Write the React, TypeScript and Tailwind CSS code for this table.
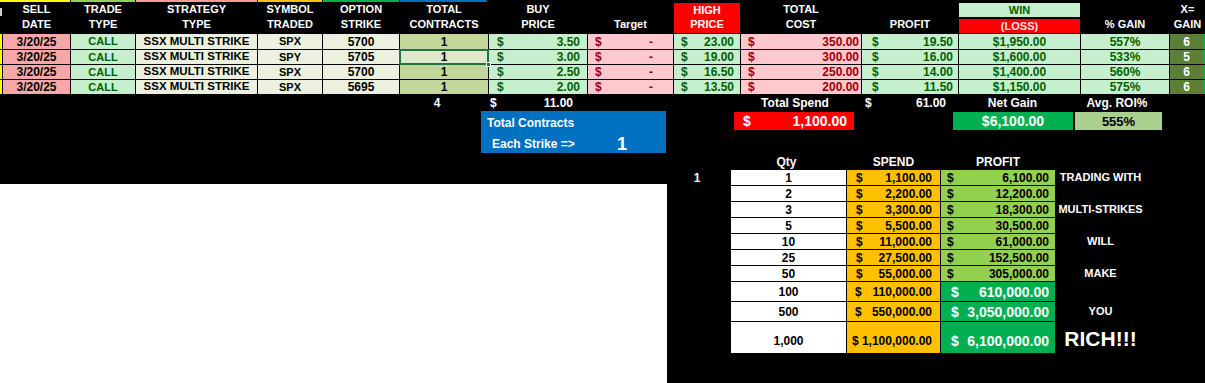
const cols =
  "grid grid-cols-[2px_67px_64px_121px_64px_76px_88px_98px_85px_66px_120px_96px_121px_88px_35px] gap-x-px";

const trades = [
  { date: "3/20/25", sym: "SPX", strike: "5700", buy: "3.50", high: "23.00", cost: "350.00", profit: "19.50", win: "$1,950.00", gain: "557%", x: "6" },
  { date: "3/20/25", sym: "SPY", strike: "5705", buy: "3.00", high: "19.00", cost: "300.00", profit: "16.00", win: "$1,600.00", gain: "533%", x: "5" },
  { date: "3/20/25", sym: "SPX", strike: "5700", buy: "2.50", high: "16.50", cost: "250.00", profit: "14.00", win: "$1,400.00", gain: "560%", x: "6" },
  { date: "3/20/25", sym: "SPX", strike: "5695", buy: "2.00", high: "13.50", cost: "200.00", profit: "11.50", win: "$1,150.00", gain: "575%", x: "6" },
];

const scale = [
  { qty: "1", spend: "1,100.00", profit: "6,100.00", note: "TRADING WITH" },
  { qty: "2", spend: "2,200.00", profit: "12,200.00", note: "" },
  { qty: "3", spend: "3,300.00", profit: "18,300.00", note: "MULTI-STRIKES" },
  { qty: "5", spend: "5,500.00", profit: "30,500.00", note: "" },
  { qty: "10", spend: "11,000.00", profit: "61,000.00", note: "WILL" },
  { qty: "25", spend: "27,500.00", profit: "152,500.00", note: "" },
  { qty: "50", spend: "55,000.00", profit: "305,000.00", note: "MAKE" },
];

function Head({ a, b }: { a?: string; b?: string }) {
  return (
    <div className="flex flex-col items-center text-[11px] leading-[15px]">
      <span className="h-[15px]">{a}</span>
      <span className="h-[15px]">{b}</span>
    </div>
  );
}

function Money({ v, cls }: { v: string; cls: string }) {
  return (
    <div className={"flex items-center justify-between text-[12px] " + cls}>
      <span>$</span>
      <span>{v}</span>
    </div>
  );
}

export default function App() {
  return (
    <div className="h-[383px] w-[1205px] bg-black text-white font-bold [font-family:'Liberation_Sans',Arial,sans-serif] flex flex-col overflow-hidden leading-none">
      {/* tab colour strip */}
      <div className="flex h-[2px]">
        <div className="w-[70px] bg-[#ffff00]" />
        <div className="ml-px w-[64px] bg-[#92d050]" />
        <div className="ml-px w-[121px] bg-[#ff9999]" />
        <div className="ml-px w-[64px] bg-[#ffc000]" />
        <div className="ml-px w-[76px] bg-[#00b050]" />
        <div className="ml-px w-[87px] bg-[#0070c0]" />
      </div>

      {/* header */}
      <div className={cols + " h-[31px]"}>
        <div className="flex pt-[6px]">
          <span className="h-[8px] w-[2px] bg-white/80" />
        </div>
        <Head a="SELL" b="DATE" />
        <Head a="TRADE" b="TYPE" />
        <Head a="STRATEGY" b="TYPE" />
        <Head a="SYMBOL" b="TRADED" />
        <Head a="OPTION" b="STRIKE" />
        <Head a="TOTAL" b="CONTRACTS" />
        <Head a="BUY" b="PRICE" />
        <Head b="Target" />
        <div className="mt-px bg-[#ff0000] flex flex-col items-center text-[11px] leading-[15px]">
          <span className="h-[14px]">HIGH</span>
          <span>PRICE</span>
        </div>
        <Head a="TOTAL" b="COST" />
        <Head b="PROFIT" />
        <div className="flex flex-col text-[11px]">
          <div className="mt-px h-[14px] bg-[#c6efce] text-[#006100] flex items-center justify-center">WIN</div>
          <div className="mt-[2px] h-[14px] bg-[#ff0000] text-[#ffe6e6] flex items-center justify-center">(LOSS)</div>
        </div>
        <Head b="% GAIN" />
        <Head a="X=" b="GAIN" />
      </div>

      {/* trade rows */}
      <div className="mt-px flex flex-col gap-y-px">
        {trades.map((t, i) => (
          <div key={i} className={cols + (i === 0 ? " h-[15px]" : " h-[14px]")}>
            <div className="bg-[#ffff00]" />
            <div className="bg-[#f6a8a8] text-black text-[12px] flex items-center justify-center">{t.date}</div>
            <div className="bg-[#c6efce] text-[#006100] text-[11px] flex items-center justify-center">CALL</div>
            <div className="bg-[#ebf1de] text-black text-[11.5px] flex items-center justify-center">SSX MULTI STRIKE</div>
            <div className="bg-[#ebf1de] text-black text-[11px] flex items-center justify-center">{t.sym}</div>
            <div className="bg-[#ebf1de] text-black text-[12px] flex items-center justify-center">{t.strike}</div>
            {i === 1 ? (
              <div className="relative bg-[#dfe9cc] text-black text-[12px] flex items-center justify-center">
                1
                <span className="absolute -inset-px border-2 border-[#217346]" />
                <span className="absolute -bottom-[3px] -right-[3px] h-[5px] w-[5px] bg-[#217346] border border-white" />
              </div>
            ) : (
              <div className="bg-[#c4d79b] text-black text-[12px] flex items-center justify-center">1</div>
            )}
            <Money v={t.buy} cls="bg-[#c6efce] text-[#006100] pl-[8px] pr-[7px]" />
            <div className="bg-[#ffc7ce] text-[#9c0006] text-[12px] flex items-center justify-between pl-[7px] pr-[20px]">
              <span>$</span>
              <span>-</span>
            </div>
            <Money v={t.high} cls="bg-[#c6efce] text-[#006100] pl-[7px] pr-[6px]" />
            <Money v={t.cost} cls="bg-[#ffc7ce] text-[#9c0006] pl-[7px] pr-[2px]" />
            <Money v={t.profit} cls="bg-[#c6efce] text-[#006100] pl-[10px] pr-[5px]" />
            <div className="bg-[#c6efce] text-[#006100] text-[12px] flex items-center justify-center">{t.win}</div>
            <div className="bg-[#c6efce] text-[#006100] text-[12px] flex items-center justify-center">{t.gain}</div>
            <div className="bg-[#5b7f35] text-white text-[12px] flex items-center justify-center border-r-2 border-[#00b050]">{t.x}</div>
          </div>
        ))}
      </div>

      {/* totals */}
      <div className={cols + " mt-px h-[16px] text-[12px]"}>
        <div />
        <div />
        <div />
        <div />
        <div />
        <div />
        <div className="flex items-center justify-center pr-[14px]">4</div>
        <div className="flex items-center justify-between pl-px pr-[14px]">
          <span>$</span>
          <span>11.00</span>
        </div>
        <div />
        <div />
        <div className="flex items-center justify-center pr-[12px]">Total Spend</div>
        <div className="flex items-center justify-between pl-[3px] pr-[12px]">
          <span>$</span>
          <span>61.00</span>
        </div>
        <div className="flex items-center justify-center pr-[14px]">Net Gain</div>
        <div className="flex items-center justify-center pr-[16px]">Avg. ROI%</div>
        <div />
      </div>

      {/* lower area */}
      <div className="flex flex-1">
        <div className="flex w-[667px] flex-col">
          <div className="h-[73px]">
            <div className="ml-[481px] flex h-[42px] w-[185px] flex-col bg-[#0070c0] text-[12px]">
              <div className="flex h-[23px] items-center pl-[6px]">Total Contracts</div>
              <div className="flex flex-1 items-center pl-[11px]">
                <span className="w-[125px]">Each Strike =&gt;</span>
                <span className="text-[18px]">1</span>
              </div>
            </div>
          </div>
          <div className="flex-1 bg-white" />
        </div>

        <div className="flex flex-1 flex-col pt-px">
          <div className="flex h-[18px]">
            <div className="ml-[67px] flex w-[120px] items-center justify-between bg-[#ff0000] pl-[9px] pr-[7px] text-[14px]">
              <span>$</span>
              <span>1,100.00</span>
            </div>
            <div className="ml-[99px] flex w-[120px] items-center justify-center bg-[#00b050] text-[14px]">$6,100.00</div>
            <div className="ml-[2px] flex w-[87px] items-center justify-center bg-[#a9d08e] text-[13px] text-black">555%</div>
          </div>

          <div className="mt-[24px] grid grid-cols-[63px_115px_93px_114px_89px] gap-px text-[12px]">
            <div className="h-[15px]" />
            <div className="flex items-center justify-center pr-[4px]">Qty</div>
            <div className="flex items-center justify-center">SPEND</div>
            <div className="flex items-center justify-center">PROFIT</div>
            <div />

            {scale.map((r, i) => (
              <div key={r.qty} className="contents">
                <div className="flex h-[15px] items-center justify-center pr-[3px]">{i === 0 ? "1" : ""}</div>
                <div className="flex items-center justify-center bg-white text-black">{r.qty}</div>
                <Money v={r.spend} cls="bg-[#ffc000] text-black pl-[9px] pr-[8px]" />
                <Money v={r.profit} cls="bg-[#92d050] text-black pl-[6px] pr-[6px]" />
                <div className="flex items-center justify-center text-[11px]">{r.note}</div>
              </div>
            ))}

            <div className="h-[19px]" />
            <div className="flex items-center justify-center bg-white text-black">100</div>
            <Money v="110,000.00" cls="bg-[#ffc000] text-black pl-[8px] pr-[8px]" />
            <div className="flex items-center justify-between bg-[#00b050] pl-[10px] pr-[6px] text-[14px]">
              <span>$</span>
              <span>610,000.00</span>
            </div>
            <div />

            <div className="h-[19px]" />
            <div className="flex items-center justify-center bg-white text-black">500</div>
            <Money v="550,000.00" cls="bg-[#ffc000] text-black pl-[8px] pr-[8px]" />
            <div className="flex items-center justify-between bg-[#00b050] pl-[10px] pr-[6px] text-[14px]">
              <span>$</span>
              <span>3,050,000.00</span>
            </div>
            <div className="flex items-center justify-center text-[11px]">YOU</div>

            <div className="h-[31px]" />
            <div className="flex items-end justify-center bg-white pb-[6px] text-black">1,000</div>
            <div className="flex items-end justify-end bg-[#ffc000] pb-[6px] pr-[8px] text-black whitespace-pre">
              {"$ 1,100,000.00"}
            </div>
            <div className="flex items-end justify-between bg-[#00b050] pb-[5px] pl-[10px] pr-[6px] text-[14px]">
              <span>$</span>
              <span>6,100,000.00</span>
            </div>
            <div className="flex items-center justify-center pt-[2px] text-[21px]">RICH!!!</div>
          </div>
        </div>
      </div>
    </div>
  );
}
